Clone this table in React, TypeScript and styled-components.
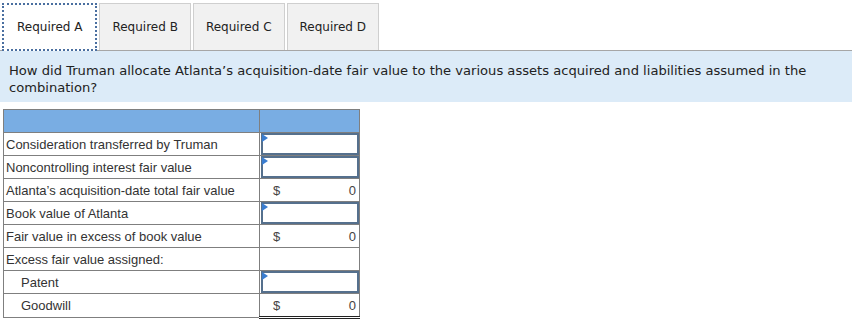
import styled, { createGlobalStyle } from "styled-components";

const GlobalStyle = createGlobalStyle`
  html, body {
    margin: 0;
    padding: 0;
    background: #ffffff;
  }
  body {
    font-family: "DejaVu Sans", Verdana, sans-serif;
    color: #222;
  }
`;

interface Row {
  label: string;
  indent?: boolean;
  kind: "input" | "total" | "blank";
  last?: boolean;
}

const rows: Row[] = [
  { label: "Consideration transferred by Truman", kind: "input" },
  { label: "Noncontrolling interest fair value", kind: "input" },
  { label: "Atlanta’s acquisition-date total fair value", kind: "total" },
  { label: "Book value of Atlanta", kind: "input" },
  { label: "Fair value in excess of book value", kind: "total" },
  { label: "Excess fair value assigned:", kind: "blank" },
  { label: "Patent", indent: true, kind: "input" },
  { label: "Goodwill", indent: true, kind: "total", last: true },
];

const tabs = ["Required A", "Required B", "Required C", "Required D"];

export default function App() {
  return (
    <Page>
      <GlobalStyle />
      <TabBar>
        {tabs.map((t, idx) => (
          <TabButton key={t} $active={idx === 0}>
            {t}
          </TabButton>
        ))}
      </TabBar>
      <Question>
        How did Truman allocate Atlanta’s acquisition-date fair value to the
        various assets acquired and liabilities assumed in the
        <br />
        combination?
      </Question>
      <Table>
        <thead>
          <tr>
            <HeadCell />
            <HeadCell />
          </tr>
        </thead>
        <tbody>
          {rows.map((r) => (
            <tr key={r.label}>
              <LabelCell $indent={r.indent}>{r.label}</LabelCell>
              <ValueCell $last={r.last}>
                {r.kind === "input" && (
                  <InputBox>
                    <Marker />
                  </InputBox>
                )}
                {r.kind === "total" && (
                  <Total>
                    <span>$</span>
                    <span>0</span>
                  </Total>
                )}
              </ValueCell>
            </tr>
          ))}
        </tbody>
      </Table>
    </Page>
  );
}

const Page = styled.div`
  width: 861px;
  height: 325px;
  overflow: hidden;
`;

const TabBar = styled.div`
  display: flex;
  gap: 2px;
  padding: 3px 0 0 2px;
  width: 850px;
  border-bottom: 1px solid #a6a6a6;
  align-items: flex-end;
`;

const TabButton = styled.div<{ $active?: boolean }>`
  height: ${(p) => (p.$active ? "48px" : "47px")};
  box-sizing: border-box;
  display: flex;
  align-items: center;
  padding: 0 ${(p) => (p.$active ? "13px" : "12px")};
  font-size: 12px;
  color: #222;
  background: ${(p) => (p.$active ? "#ffffff" : "#f1f1f1")};
  border: ${(p) => (p.$active ? "2px dotted #4a6fa0" : "1px solid #cfcfcf")};
  border-bottom: ${(p) => (p.$active ? "2px dotted #4a6fa0" : "none")};
  margin-bottom: ${(p) => (p.$active ? "-1px" : "0")};
  margin-top: ${(p) => (p.$active ? "-2px" : "0")};
  position: relative;
`;

const Question = styled.div`
  width: 852px;
  box-sizing: border-box;
  background: #dcebf8;
  padding: 11px 9px 0 9px;
  font-size: 13.1px;
  line-height: 17px;
  color: #222;
  height: 51px;
`;

const Table = styled.table`
  margin: 7px 0 0 3px;
  border-collapse: collapse;
  font-family: "Liberation Sans", Arial, sans-serif;
  font-size: 13px;
  color: #333;
`;

const HeadCell = styled.th`
  height: 22px;
  padding: 0;
  background: #79ade3;
  border: 1px solid #7f7f7f;
  &:first-child {
    width: 255px;
  }
  &:last-child {
    width: 99px;
  }
`;

const LabelCell = styled.td<{ $indent?: boolean }>`
  height: 22px;
  padding: 0 0 0 ${(p) => (p.$indent ? "17px" : "2px")};
  border: 1px solid #7f7f7f;
  white-space: nowrap;
`;

const ValueCell = styled.td<{ $last?: boolean }>`
  height: 22px;
  padding: 0;
  border: 1px solid #7f7f7f;
  border-bottom: ${(p) => (p.$last ? "3px double #222" : "1px solid #7f7f7f")};
  position: relative;
`;

const InputBox = styled.div`
  position: absolute;
  inset: 0 0 0 1px;
  border: 2px solid #55708d;
  background: #fff;
`;

const Marker = styled.div`
  position: absolute;
  left: -1px;
  top: -1px;
  width: 0;
  height: 0;
  border-top: 4px solid transparent;
  border-bottom: 4px solid transparent;
  border-left: 6px solid #3a7dd0;
`;

const Total = styled.div`
  display: flex;
  justify-content: space-between;
  padding: 0 3px 0 13px;
  color: #444;
`;
